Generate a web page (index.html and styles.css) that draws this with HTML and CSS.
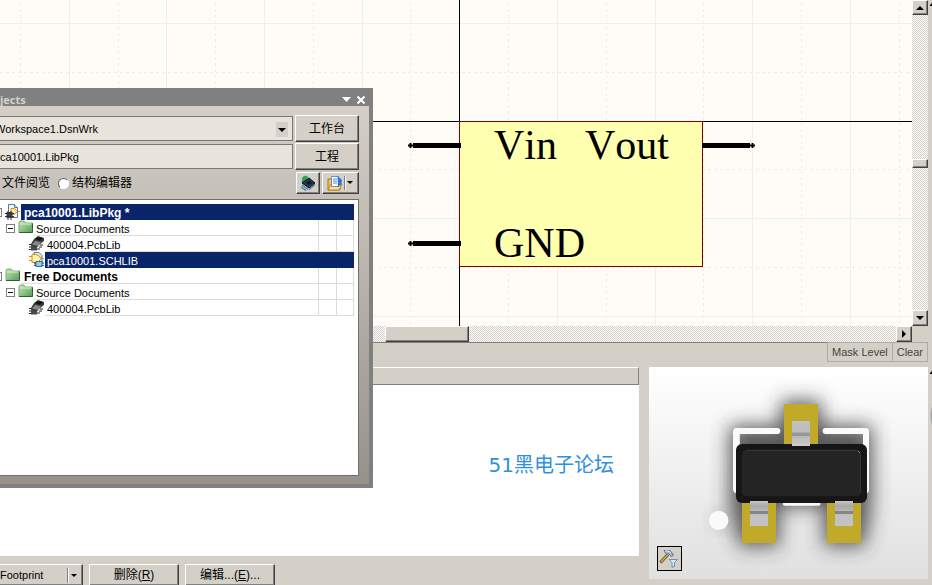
FILE: index.html
```
<!DOCTYPE html>
<html lang="zh-CN">
<head>
<meta charset="utf-8">
<title>pca10001.SCHLIB</title>
<link rel="stylesheet" href="styles.css">
</head>
<body>
<svg class="defs" aria-hidden="true">
  <defs>
    <linearGradient id="folderFill" x1="0" y1="0" x2="1" y2="1"><stop offset="0" stop-color="#c4e6b4"/><stop offset="1" stop-color="#589c58"/></linearGradient>
    <symbol id="folder" viewBox="0 0 16 16">
      <path d="M1 2.500 2 1h4l1 2h7.500v9.500H1z" fill="url(#folderFill)" stroke="#7fae76"/>
      <path d="M1 12.500h13.500V3.500" fill="none" stroke="#2f6038"/>
      <path d="M2 4h11" stroke="#d9f2cc"/>
    </symbol>
    <symbol id="chip" viewBox="0 0 16 16">
      <path d="M0 8.500h3M0 11h3M0 13.500h3M11 9h3M10 11h3M8 13h3" stroke="#222"/>
      <path d="M5 3 9 0l6 2v3l-5 4-4 5H2V8z" fill="#3a3a3a"/>
      <path d="M6 3 9 1l5 1-3 3z" fill="#151515"/>
      <path d="M3 8.500 6 5l6 1-3 4z" fill="#888"/>
      <path d="M2 9.500 8 11v3.500H2z" fill="#4a4a4a"/>
    </symbol>
    <symbol id="gate" viewBox="0 0 16 16">
      <path d="M5 .5h5l3 3v9H6z" fill="#d8ecfa" stroke="#4a7ab8"/>
      <path d="M0 4.500h3M0 8.500h3M11 6.500h4" stroke="#e88a00"/>
      <path d="M3 2.500h4q4 1 5 4-1 3-5 4H3z" fill="#fff3b4" stroke="#e88a00"/>
      <path d="M7 9.500h6v5H7z" fill="#9cd0e0" stroke="#2f70a8"/>
      <path d="M5 11h2M5 13.500h2M13 11h2M13 13.500h2" stroke="#184c90"/>
    </symbol>
    <symbol id="package" viewBox="0 0 16 16">
      <path d="M3.500.5h6l3 3v10h-9z" fill="#f2f8ff" stroke="#5579a8"/>
      <path d="M9.500.5v3h3" fill="#cfe0f4" stroke="#5579a8"/>
      <path d="M6 4.500h3l3.500 3-3.500 3H6z" fill="#fff0a0" stroke="#e88a00"/>
      <path d="M12 7.500h3" stroke="#e88a00"/>
      <path d="M1.500 8h6v6h-6z" fill="#444"/>
      <path d="M0 9.500h9M0 12.500h9M3 7v9M6 7v9" stroke="#333"/>
    </symbol>
  </defs>
</svg>

<main class="app">
  <section class="editor">
    <svg class="sheet" role="img" aria-label="Schematic symbol">
      <path class="grid" d="M69.500 0V326M166.500 0V326M264.500 0V326M362.500 0V326M557.500 0V326M655.500 0V326M752.500 0V326M850.500 0V326M0 23.500H912M0 218.500H912M0 316.500H912"/>
      <path class="grid half" d="M20.500 3V326M118.500 3V326M215.500 3V326M313.500 3V326M410.500 3V326M508.500 3V326M606.500 3V326M703.500 3V326M801.500 3V326M899.500 3V326M0 72.500H912M0 169.500H912M0 267.500H912"/>
      <path class="axis" d="M459.500 0V326M0 121.500H912"/>
      <rect class="symbol" x="459.500" y="121.500" width="243" height="145"/>
      <path class="pin" d="M413 145.500H461M413 243.500H461M702 145.500H750"/>
      <path class="axis tip" d="M408 145.500h6M410.500 143v5M408 243.500h6M410.500 241v5M749 145.500h6M752.500 143v5"/>
      <text x="494" y="159">Vin</text>
      <text x="585" y="159">Vout</text>
      <text x="494" y="257">GND</text>
    </svg>
    <div class="vscroll">
      <button class="bevel arrow top" aria-label="Scroll up"><svg width="8" height="4"><path d="M4 0 0 4h8z"/></svg></button>
      <i class="before"></i><i class="bevel thumb"></i><i class="after"></i>
      <button class="bevel arrow" aria-label="Scroll down"><svg width="8" height="4"><path d="M0 0h8L4 4z"/></svg></button>
    </div>
    <div class="hscroll">
      <div class="track"><i class="bevel thumb"></i></div>
      <button class="bevel arrow" aria-label="Scroll right"><svg width="4" height="8"><path d="M0 0l4 4-4 4z"/></svg></button>
    </div>
  </section>

  <div class="mask"><button>Mask Level</button><button>Clear</button></div>

  <section class="lower">
    <div class="models">
      <div class="head"></div>
      <div class="list"><span>51黑电子论坛</span></div>
      <div class="actions">
        <button class="bevel foot">Footprint<svg width="14" height="15"><path d="M1.500 0v15" stroke="#808080"/><path d="M2.500 0v15" stroke="#fff"/><path d="M5 6h6L8 9z"/></svg></button>
        <button class="bevel">删除(<u>R</u>)</button>
        <button class="bevel">编辑...(<u>E</u>)...</button>
      </div>
    </div>
    <div class="preview">
      <svg viewBox="27 21 837 636" role="img" aria-label="SOT-23 footprint">
        <defs>
          <filter id="soft" x="-40%" y="-40%" width="180%" height="180%"><feGaussianBlur stdDeviation="28"/></filter>
          <linearGradient id="lead" x1="0" y1="0" x2="0" y2="1"><stop offset="0" stop-color="#c6c6c6"/><stop offset=".2" stop-color="#a8a8a8"/><stop offset=".4" stop-color="#b8b8b8"/><stop offset=".41" stop-color="#858585"/><stop offset=".52" stop-color="#858585"/><stop offset=".53" stop-color="#c2c2c2"/><stop offset="1" stop-color="#c2c2c2"/></linearGradient>
          <linearGradient id="leadTop" x1="0" y1="0" x2="0" y2="1"><stop offset="0" stop-color="#c2c2c2"/><stop offset=".43" stop-color="#bcbcbc"/><stop offset=".5" stop-color="#969696"/><stop offset=".6" stop-color="#999"/><stop offset=".62" stop-color="#b8b8b8"/><stop offset="1" stop-color="#cecece"/></linearGradient>
        </defs>
        <path d="M422 122h122v75h152v233l-23 129H551V440H418v119H296l-10-60-17-55V197h153z" fill="#333" opacity=".8" filter="url(#soft)"/>
        <circle cx="240" cy="481" r="28" fill="#777" opacity=".35" filter="url(#soft)"/>
        <path d="M289 390V213H412M557 213H678V390" fill="none" stroke="#fafafa" stroke-width="18" stroke-linecap="round" stroke-linejoin="round"/>
        <path d="M289 213V390" stroke="#fafafa" stroke-width="20"/>
        <path d="M434 432H536" stroke="#fafafa" stroke-width="11" stroke-linecap="round"/>
        <circle cx="236" cy="481" r="29" fill="#fafafa"/>
        <path d="M432 132h102v130H432zM306 420h102v129H306zM561 420h102v129H561z" fill="#c1aa29"/>
        <rect x="288" y="252" width="393" height="177" rx="18" fill="#161616"/>
        <rect x="305" y="270" width="358" height="139" rx="14" fill="#242424"/>
        <path d="M318 271H648q13 3 13 14V396" fill="none" stroke="#393939" stroke-width="3"/>
        <path d="M654 273l6 6" stroke="#888" stroke-width="3"/>
        <rect x="456" y="183" width="54" height="75" fill="url(#leadTop)"/>
        <rect x="330" y="423" width="54" height="75" fill="url(#lead)"/>
        <rect x="585" y="423" width="54" height="75" fill="url(#lead)"/>
      </svg>
      <button class="tool" aria-label="Filter settings">
        <svg width="21" height="21" viewBox="0 0 21 21">
          <path d="M1.500 14.500 9 6.500" stroke="#5a4010" stroke-width="3"/>
          <path d="M2 14 9 6.500" stroke="#e6b440" stroke-width="1.500"/>
          <path d="M5 2.500h6l3.500 4.500-2 1.500-3-3-2 1z" fill="#a9b9d0" stroke="#566c90"/>
          <path d="M6 3h4l2 2" stroke="#eef4fb" fill="none"/>
          <path d="M10 11.500h8.500l-3 3v4l-2.500.8v-4.800z" fill="#dbe8f8" stroke="#6e8bb5"/>
        </svg>
      </button>
    </div>
  </section>
  <svg class="edge" viewBox="0 0 4 585" preserveAspectRatio="xMaxYMin" aria-hidden="true"><path d="M2 6V5l2-2v3zM2 374v-1l2-2v3z"/><path d="M4 406q-3 9 0 20z" fill="#a8a8a8"/></svg>
</main>

<aside class="panel">
  <header><h1>jects</h1>
    <button aria-label="Panel menu"><svg width="9" height="5"><path d="M0 0h9L4.500 5z" fill="#fff"/></svg></button>
    <button aria-label="Close"><svg width="8" height="8"><path d="M.5.500l7 7M7.500.500l-7 7" stroke="#fff" stroke-width="2"/></svg></button>
  </header>
  <div class="body">
    <div class="line">
      <div class="combo"><select class="field" aria-label="Workspace"><option>Workspace1.DsnWrk</option></select><span class="drop"><svg width="8" height="4"><path d="M0 0h8L4 4z"/></svg></span></div>
      <button class="bevel wide">工作台</button>
    </div>
    <div class="line">
      <input class="field" aria-label="Project" value="ca10001.LibPkg">
      <button class="bevel wide">工程</button>
    </div>
    <div class="line modes">
      <span>文件阅览</span>
      <label><input type="radio" name="mode">结构编辑器</label>
      <button class="bevel icon" aria-label="Refresh"><svg width="16" height="16" viewBox="0 0 16 16"><circle cx="6" cy="5.500" r="5" fill="#9fcdf2"/><path d="M2 3q3-4 6-1L6 5 5 8 2 7z" fill="#30a848"/><path d="M2 8 9 3l6 5-6 5z" fill="#263850" stroke="#111"/><path d="M6 8 9 5.500 12 8 9 10z" fill="#101820"/><path d="M2 10l6 4.500M15 9.500 9 14.500M1 12l5 3.500" stroke="#4e80b0" stroke-width="1.500"/></svg></button>
      <button class="bevel open" aria-label="Open document"><svg width="28" height="16" viewBox="0 0 28 16"><path d="M1 4h5l1 2h6v9H1z" fill="#f5c34c" stroke="#ad7610"/><path d="M1 15 4 9h11l-3 6z" fill="#ffdf83" stroke="#bb861c"/><path d="M4.500 1.500h7v10h-7z" fill="#fff" stroke="#6b8ccc"/><path d="M6 4h4M6 6h4M6 8h4" stroke="#5c82d0"/><path d="M10.500 1 15 5l-1 5-3 2z" fill="#2f70dc"/><path d="M17.500 1v14" stroke="#808080"/><path d="M18.500 1v14" stroke="#fff"/><path d="M20 6h6l-3 3z"/></svg></button>
    </div>
    <ul class="tree">
      <li class="l0 on"><i class="box"></i><svg><use href="#package"/></svg><b>pca10001.LibPkg *</b></li>
      <li class="l1"><i class="box"></i><svg><use href="#folder"/></svg><span>Source Documents</span><em></em><em></em></li>
      <li class="l2"><svg><use href="#chip"/></svg><span>400004.PcbLib</span><em></em><em></em></li>
      <li class="l2 on"><svg><use href="#gate"/></svg><span>pca10001.SCHLIB</span></li>
      <li class="l0"><i class="box"></i><svg><use href="#folder"/></svg><b>Free Documents</b><em></em><em></em></li>
      <li class="l1"><i class="box"></i><svg><use href="#folder"/></svg><span>Source Documents</span><em></em><em></em></li>
      <li class="l2"><svg><use href="#chip"/></svg><span>400004.PcbLib</span><em></em><em></em></li>
    </ul>
  </div>
</aside>
</body>
</html>
```
FILE: styles.css
```
* { box-sizing: border-box; }
body {
  margin: 0;
  height: 100vh;
  overflow: hidden;
  background: #d4d0c8;
  color: #000;
  font: 11px/16px "Liberation Sans", "Noto Sans CJK SC", sans-serif;
}
button, input, select { font: inherit; color: inherit; margin: 0; padding: 0; border-radius: 0; }
button { background: #d4d0c8; border: 0; }
svg { display: block; flex: none; }
.defs { position: absolute; width: 0; height: 0; }

.app { position: relative; height: 100%; padding-right: 4px; display: flex; flex-direction: column; }
.edge { position: absolute; top: 0; right: 0; width: 4px; height: 585px; }

.bevel {
  background: #d4d0c8;
  border: 1px solid;
  border-color: #fff #404040 #404040 #fff;
  box-shadow: inset -1px -1px #808080;
}

/* schematic sheet */
.editor { flex: 1; min-height: 0; display: grid; grid-template: minmax(0, 1fr) 17px / minmax(0, 1fr) 16px; }
.sheet { width: 100%; height: 100%; background: #fffcf8; }
.sheet text { font: 42px "Liberation Serif", serif; font-kerning: none; }
.grid { stroke: #eeeeea; fill: none; }
.half { stroke-dasharray: 3 3; }
.axis { stroke: #000; fill: none; }
.tip { stroke-width: 2; }
.symbol { fill: #ffffb0; stroke: #800000; }
.pin { stroke: #000; stroke-width: 5; }

.vscroll, .hscroll {
  display: flex;
  background: repeating-conic-gradient(#fff 0 25%, #d4d0c8 0 50%) 0 0 / 2px 2px;
}
.vscroll { flex-direction: column; }
.hscroll { grid-column: 1; border-bottom: 1px solid #808080; }
.arrow { width: 16px; height: 16px; flex: none; display: grid; place-items: center; }
.arrow.top { height: 15px; }
.before { flex: 144; }
.after { flex: 142; }
.vscroll .thumb { height: 9px; }
.track { flex: 1; display: flex; }
.track .thumb { margin-left: 43%; width: 84px; }

.mask { display: flex; justify-content: flex-end; height: 24px; margin-top: -1px; padding-bottom: 4px; flex: none; z-index: 1; }
.mask button { border: 1px solid #b0aca4; padding: 0 4px; color: #444; }
.mask button + button { border-left: 0; }

/* model list and preview */
.lower { display: flex; flex: none; gap: 10px; height: 219px; }
.models { flex: 1; display: flex; flex-direction: column; }
.models > div { flex: none; }
.head { height: 18px; border: 1px solid #808080; border-top-color: #fff; border-left: 0; margin-top: 1px; }
.list { height: 171px; background: #fff; display: flex; justify-content: flex-end; align-items: center; padding: 0 25px 12px 0; }
.list span { font: 20px/24px "DejaVu Sans", "Noto Sans CJK SC", sans-serif; color: #2f8fe0; }
.actions { display: flex; gap: 6px; padding-top: 8px; }
.actions button { width: 90px; height: 22px; white-space: nowrap; font-size: 12px; }
.actions .foot { width: 83px; display: flex; align-items: center; justify-content: space-between; padding-right: 2px; border-left: 0; font-size: 11px; }
.preview { position: relative; width: 279px; height: 212px; margin-top: 1px; background: linear-gradient(#fff, #e0e0e0); }
.preview > svg { width: 100%; height: 100%; }
.tool { position: absolute; left: 8px; bottom: 8px; width: 25px; height: 25px; border: 1px solid #000; display: grid; place-items: center; }

/* floating projects panel */
.panel { position: absolute; z-index: 2; left: 0; top: 88px; width: 373px; height: 400px; background: #808080; padding: 0 4px 4px 0; display: flex; flex-direction: column; }
.panel header { height: 18px; display: flex; align-items: center; gap: 6px; padding: 5px 4px 0 0; }
.panel h1 { flex: 1; margin: 0; font: bold 11px/14px "Open Sans", sans-serif; color: #d4d0c8; }
.panel header button { background: none; }
.body { flex: 1; display: flex; flex-direction: column; padding: 9px 10px 8px 0; background: linear-gradient(#d4d0c8, #96928a); }
.line { display: flex; gap: 2px; height: 27px; margin-bottom: 1px; align-items: center; }
.combo { flex: 1; position: relative; display: flex; }
.field { flex: 1; min-width: 0; height: 25px; appearance: none; background: #e8e4dc; border: 1px solid #787878; border-left: 0; outline: 0; }
.combo .field { text-indent: -5px; }
.drop { position: absolute; right: 5px; top: 6px; width: 12px; height: 15px; display: grid; place-items: center; background: #d4d0c8; pointer-events: none; }
.wide { width: 64px; height: 27px; font-size: 12px; }
.modes { height: 22px; margin: 1px 0 5px; padding-left: 2px; font-size: 12px; }
.modes label { flex: 1; display: flex; align-items: center; gap: 3px; margin-left: 6px; }
.modes input { appearance: none; width: 11px; height: 11px; border: 1px solid; border-color: #606060 #fff #fff #606060; border-radius: 50%; background: #fff; }
.icon, .open { width: 24px; height: 22px; display: grid; place-items: center; }
.open { width: 37px; }

.tree { flex: 1; margin: 0; padding: 4px 4px 0 0; list-style: none; background: #fff; border: 1px solid #707070; border-left: 0; line-height: 18px; }
.tree li { display: flex; height: 16px; }
.tree li > svg { width: 16px; height: 16px; }
.box { flex: none; width: 9px; height: 9px; margin: 4px 3px 0 0; border: 1px solid #808080; background: linear-gradient(#000, #000) center / 5px 1px no-repeat; }
.l0 { margin-left: -7px; }
.l1 { padding-left: 6px; }
.l2 { padding-left: 29px; }
.tree b, .tree span { flex: 1; padding-left: 2px; border-bottom: 1px solid #dcdcdc; white-space: nowrap; }
.tree b { padding-left: 3px; font-size: 12px; }
.tree em { width: 18px; border: 1px solid #dcdcdc; border-width: 0 0 1px 1px; }
.tree em:last-child { border-right-width: 1px; }
.on b, .on span { background: #0a246a; border-color: #0a246a; color: #fff; }
```
